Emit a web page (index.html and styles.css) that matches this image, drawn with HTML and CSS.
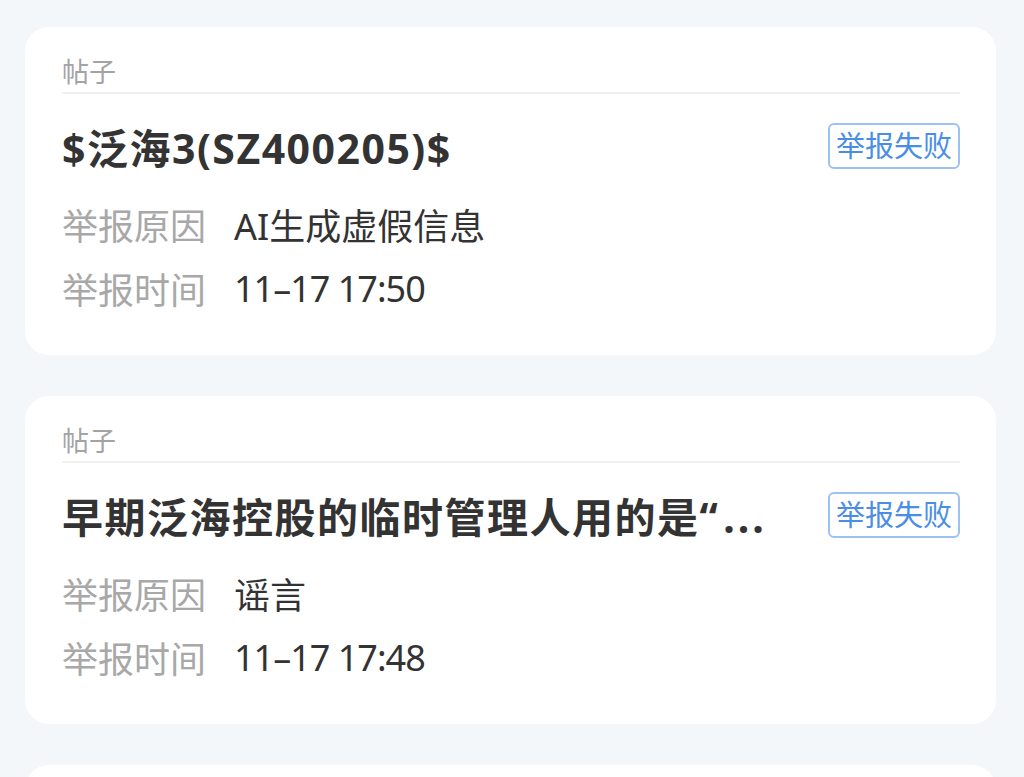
FILE: index.html
```html
<!DOCTYPE html>
<html lang="zh-CN">
<head>
    <meta charset="UTF-8">
    <meta name="viewport" content="width=device-width, initial-scale=1.0">
    <title>举报记录</title>
    <link rel="stylesheet" href="styles.css">
</head>
<body>
    <div class="report_list">
        <div class="report_card">
            <p class="card_type">帖子</p>
            <div class="card_title_row">
                <p class="card_title">$泛海3(SZ400205)$</p>
                <span class="status_badge">举报失败</span>
            </div>
            <div class="info_list">
                <div class="info_row">
                    <span class="info_label">举报原因</span>
                    <span class="info_value">AI生成虚假信息</span>
                </div>
                <div class="info_row">
                    <span class="info_label">举报时间</span>
                    <span class="info_value num">11–17 17:50</span>
                </div>
            </div>
        </div>
        <div class="report_card">
            <p class="card_type">帖子</p>
            <div class="card_title_row">
                <p class="card_title">早期泛海控股的临时管理人用的是“<span class="dots">...</span></p>
                <span class="status_badge">举报失败</span>
            </div>
            <div class="info_list">
                <div class="info_row">
                    <span class="info_label">举报原因</span>
                    <span class="info_value">谣言</span>
                </div>
                <div class="info_row">
                    <span class="info_label">举报时间</span>
                    <span class="info_value num">11–17 17:48</span>
                </div>
            </div>
        </div>
        <div class="report_card"></div>
    </div>
</body>
</html>
```

FILE: styles.css
```css
body {
    margin: 0;
    background: #f4f7f9;
    font-family: "Noto Sans", "Noto Sans CJK SC", sans-serif;
    color: #333;
}
.report_list {
    display: flex;
    flex-direction: column;
    gap: 41px;
    padding: 27px 28px 0 25px;
    height: 777px;
    box-sizing: border-box;
    overflow: hidden;
}
.report_card {
    flex-shrink: 0;
    background: white;
    border-radius: 24px;
    padding: 25px 36px 35px 37px;
    min-height: 120px;
}
.card_type {
    margin: 0;
    height: 40px;
    line-height: 40px;
    font-size: 27px;
    color: #a3a3a3;
    border-bottom: 2px solid #eef0f2;
}
.card_title_row {
    display: flex;
    align-items: center;
    justify-content: space-between;
    height: 72px;
    margin-top: 16px;
}
.card_title {
    margin: 0;
    font-size: 41px;
    font-weight: bold;
    color: #333;
    white-space: nowrap;
    letter-spacing: 1.5px;
}
.dots {
    margin-left: 4px;
    letter-spacing: 3px;
}
.status_badge {
    display: inline-block;
    height: 42px;
    line-height: 42px;
    padding: 0 6px;
    border: 2px solid #9cc1f2;
    border-radius: 6px;
    font-size: 29px;
    color: #4a8de6;
}
.info_list {
    margin-top: 10px;
}
.info_row {
    display: flex;
    align-items: center;
    height: 64px;
    font-size: 36px;
}
.info_label {
    width: 172px;
    color: #a8a8a8;
}
.info_value {
    color: #333;
}
.num {
    letter-spacing: -1px;
}
```
